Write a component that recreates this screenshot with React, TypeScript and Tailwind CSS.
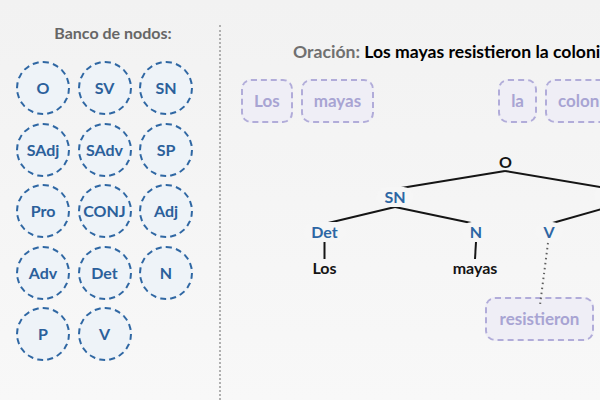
import React from "react";

const FONT = { fontFamily: "Lato, 'Open Sans', sans-serif" };

const BANK = ["O", "SV", "SN", "SAdj", "SAdv", "SP", "Pro", "CONJ", "Adj", "Adv", "Det", "N", "P", "V"];

const WORDS = ["Los", "mayas", "resistieron", "la", "colonización", "española"];

/* tree nodes, coordinates relative to the tree canvas */
type TreeNode = { label: string; x: number; y: number; kind: "cat" | "root" | "word" };

const NODES: TreeNode[] = [
  { label: "O", x: 284.5, y: 39, kind: "root" },
  { label: "SN", x: 174, y: 74, kind: "cat" },
  { label: "SV", x: 391, y: 74, kind: "cat" },
  { label: "Det", x: 103.5, y: 109, kind: "cat" },
  { label: "N", x: 255, y: 109, kind: "cat" },
  { label: "V", x: 328, y: 109, kind: "cat" },
  { label: "Los", x: 103.5, y: 145, kind: "word" },
  { label: "mayas", x: 254, y: 145, kind: "word" },
];

const EDGES: [number, number, number, number][] = [
  [284, 48, 174, 66],
  [284, 48, 391, 66],
  [174, 84, 103, 101],
  [174, 84, 255, 101],
  [391, 83, 328, 101],
  [103.5, 119, 103.5, 136],
  [255, 119, 254, 136],
];

function WordChip({ word, hidden }: { word: string; hidden?: boolean }) {
  return (
    <div
      className={
        "h-[44px] shrink-0 flex items-center px-[11px] rounded-[10px] border-2 border-dashed border-[#b1acd9] bg-[#efeef6] text-[#a8a4d3] text-[17px] font-bold " +
        (hidden ? "invisible" : "")
      }
    >
      {word}
    </div>
  );
}

export default function App() {
  return (
    <div className="w-[600px] h-[400px] overflow-hidden flex bg-gradient-to-b from-[#f2f2f2] to-[#f8f8f8]" style={FONT}>
      {/* Node bank */}
      <div className="w-[219px] shrink-0">
        <div className="pt-[23px] pl-[7px] text-center text-[16px] leading-[19px] font-bold text-[#666]">
          Banco de nodos:
        </div>
        <div className="mt-[19px] ml-[16px] grid grid-cols-[repeat(3,54px)] gap-[7.5px]">
          {BANK.map((b) => (
            <div
              key={b}
              className="w-[54px] h-[54px] rounded-full border-2 border-dashed border-[#2f67a3] bg-[#eef3f8] flex items-center justify-center text-[16px] font-bold text-[#2b609b]"
            >
              {b}
            </div>
          ))}
        </div>
      </div>

      {/* Divider */}
      <div className="mt-[25px] border-l-2 border-dotted border-[#b0b0b0]" />

      {/* Workspace */}
      <div className="flex-1 min-w-0 flex flex-col">
        <div className="pt-[42px] pl-[72px] whitespace-nowrap text-[17.6px] leading-[20px] font-bold">
          <span className="text-[#707070]">Oración: </span>
          <span className="text-black">Los mayas resistieron la colonización española.</span>
        </div>

        <div className="mt-[17px] pl-[20px] flex gap-[8px]">
          <WordChip word="Los" />
          <WordChip word="mayas" />
          <div className="w-[108px] shrink-0" />
          <WordChip word="la" />
          <WordChip word="colonización" />
          <WordChip word="española" />
        </div>

        {/* Tree canvas */}
        <div className="relative flex-1">
          <div className="absolute left-[264px] top-[174px]">
            <div className="h-[44px] w-[109px] flex items-center justify-center rounded-[10px] border-2 border-dashed border-[#b1acd9] bg-[#efeef6] text-[#a8a4d3] text-[17px] font-bold">
              resistieron
            </div>
          </div>

          <svg className="absolute left-0 top-0" width="400" height="277">
            {EDGES.map(([x1, y1, x2, y2], i) => (
              <line key={i} x1={x1} y1={y1} x2={x2} y2={y2} stroke="#151515" strokeWidth="2" />
            ))}
            <line x1="327" y1="120" x2="319" y2="182" stroke="#5f5f5f" strokeWidth="2" strokeDasharray="1.5 3.5" />
          </svg>

          {NODES.map((n) => (
            <div
              key={n.label}
              className={
                "absolute -translate-x-1/2 -translate-y-1/2 whitespace-nowrap text-[16px] leading-[20px] font-bold px-2 rounded-full " +
                (n.kind === "cat" ? "text-[#2d66a4] bg-[#f6f6f6]" : "text-[#141414]")
              }
              style={{ left: n.x, top: n.y }}
            >
              {n.label}
            </div>
          ))}
        </div>
      </div>
    </div>
  );
}
